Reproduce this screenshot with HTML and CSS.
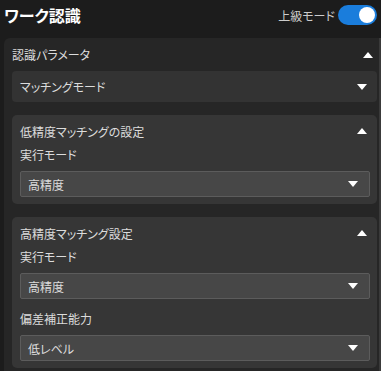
FILE: index.html
```html
<!DOCTYPE html>
<html lang="ja">
<head>
  <meta charset="UTF-8">
  <title>ワーク認識</title>
  <link rel="stylesheet" href="styles.css">
</head>
<body>
  <div class="header">
    <h1>ワーク認識</h1>
    <div class="advanced">
      <span>上級モード</span>
      <span class="toggle"><span class="knob"></span></span>
    </div>
  </div>

  <div class="panel">
    <div class="panel-head">
      <span>認識パラメータ</span>
      <span class="tri up"></span>
    </div>

    <div class="box">
      <span>マッチングモード</span>
      <span class="tri down"></span>
    </div>

    <div class="card">
      <div class="card-head">
        <span>低精度マッチングの設定</span>
        <span class="tri up"></span>
      </div>
      <div class="label">実行モード</div>
      <div class="select">
        <span>高精度</span>
        <span class="tri down"></span>
      </div>
    </div>

    <div class="card">
      <div class="card-head">
        <span>高精度マッチング設定</span>
        <span class="tri up"></span>
      </div>
      <div class="label">実行モード</div>
      <div class="select">
        <span>高精度</span>
        <span class="tri down"></span>
      </div>
      <div class="label spaced">偏差補正能力</div>
      <div class="select">
        <span>低レベル</span>
        <span class="tri down"></span>
      </div>
    </div>
  </div>
</body>
</html>
```

FILE: styles.css
```css
body {
  margin: 0;
  background: #1c1c1c;
  color: #dcdcdc;
  font-family: "Noto Sans CJK JP", "Noto Sans", sans-serif;
  font-size: 12px;
  font-feature-settings: "palt";
  overflow: hidden;
}
.header {
  height: 30px;
  display: flex;
  align-items: center;
  justify-content: space-between;
  padding: 0 4px;
}
h1 {
  margin: 0;
  font-size: 16px;
  font-weight: bold;
  color: #ffffff;
}
.advanced {
  display: flex;
  align-items: center;
  gap: 3px;
  color: #cccccc;
}
.toggle {
  width: 39px;
  height: 20px;
  border-radius: 10px;
  background: #1a7ddc;
  display: flex;
  align-items: center;
  justify-content: flex-end;
  padding-right: 2px;
  box-sizing: border-box;
}
.knob {
  width: 16px;
  height: 16px;
  border-radius: 50%;
  background: #ffffff;
}
.panel {
  margin: 8px 0 0 4px;
  background: #262626;
  border-radius: 6px 0 0 0;
  border-right: 2px solid #3a3a3a;
  padding: 0 2px 20px 8px;
}
.panel-head {
  height: 33px;
  display: flex;
  align-items: center;
  justify-content: space-between;
  padding-right: 4px;
}
.box {
  height: 31px;
  background: #333333;
  border-radius: 4px;
  display: flex;
  align-items: center;
  justify-content: space-between;
  padding: 0 10px 0 8px;
}
.card {
  margin-top: 13px;
  background: #363636;
  border-radius: 5px;
  padding: 0 7px 7px 8px;
}
.card-head {
  height: 32px;
  display: flex;
  align-items: center;
  justify-content: space-between;
  padding-right: 3px;
}
.label {
  line-height: 16px;
  margin-bottom: 8px;
}
.label.spaced {
  margin-top: 12px;
}
.select {
  height: 26px;
  box-sizing: border-box;
  background: #474747;
  border: 1px solid #5c5c5c;
  border-radius: 2px;
  display: flex;
  align-items: center;
  justify-content: space-between;
  padding: 0 11px 0 7px;
}
.tri {
  width: 0;
  height: 0;
  border-left: 5px solid transparent;
  border-right: 5px solid transparent;
}
.tri.up {
  border-bottom: 6px solid #ffffff;
}
.tri.down {
  border-top: 6px solid #ffffff;
}
```
